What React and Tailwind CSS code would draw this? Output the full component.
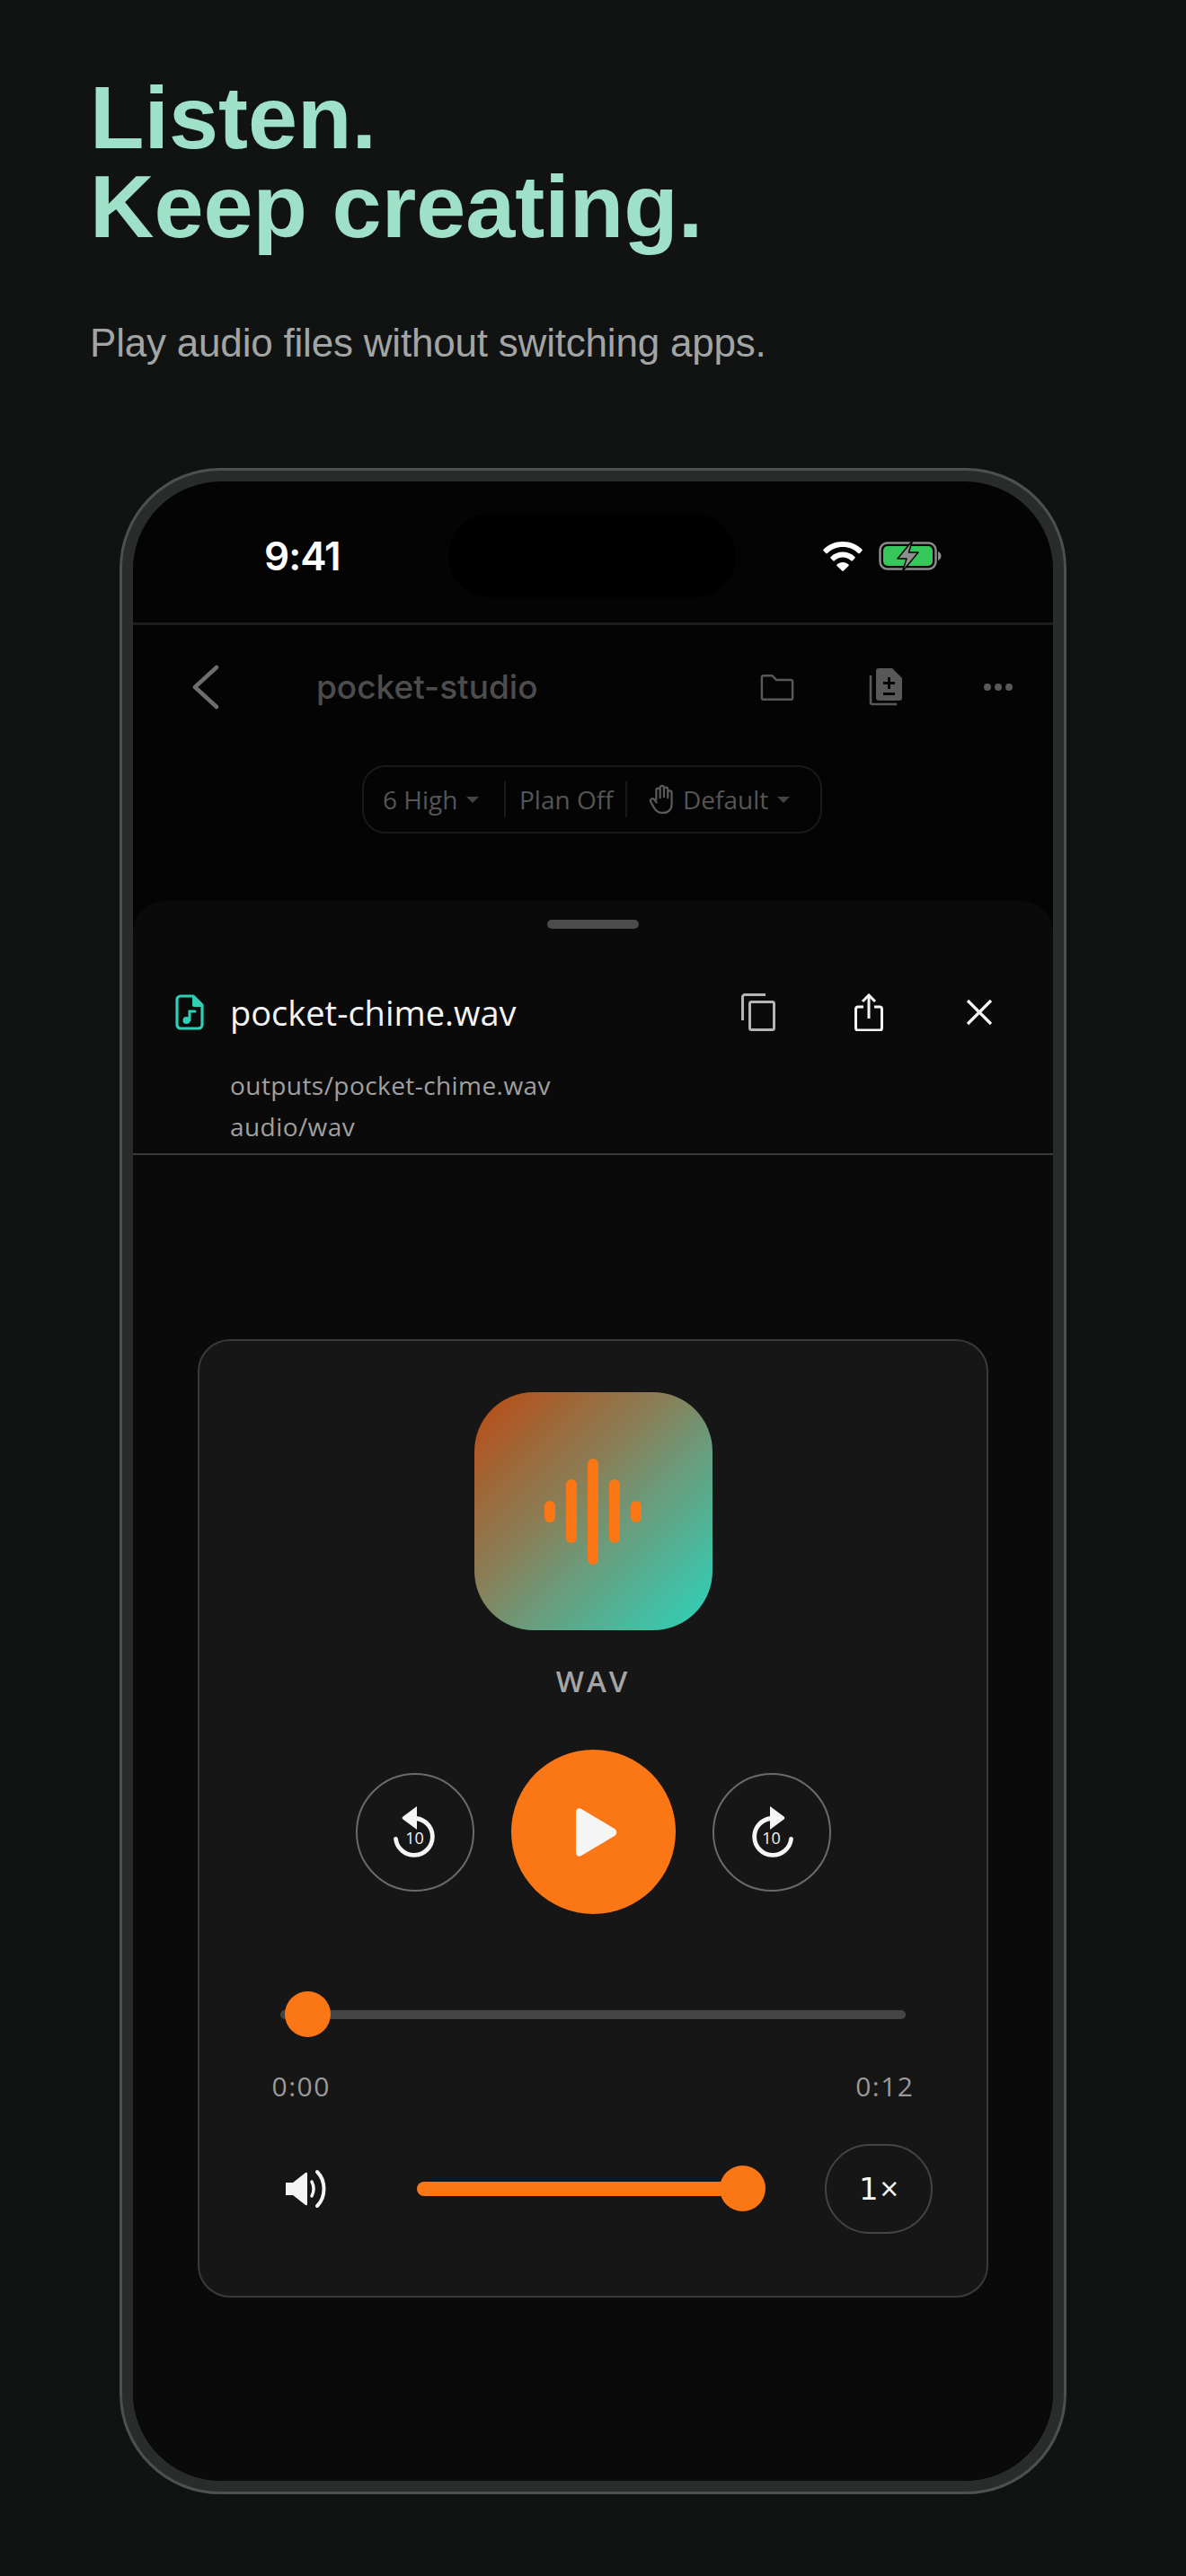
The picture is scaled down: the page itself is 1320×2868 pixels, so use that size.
import React from "react";

const plex = { fontFamily: '"Open Sans", "Noto Sans", sans-serif' };

function Wifi() {
  return (
    <svg width="44" height="33" viewBox="0 0 44 33" fill="#fff">
      <path d="M22 0C13.6 0 6 3.2.6 8.6c-.5.5-.5 1.2 0 1.700l2.500 2.600c.5.5 1.200.5 1.700 0C9.300 8.500 15.400 5.900 22 5.900s12.700 2.600 17.200 7c.5.5 1.200.5 1.700 0l2.500-2.600c.5-.5.5-1.200 0-1.700C38 3.200 30.400 0 22 0z" />
      <path d="M22 11.500c-5.200 0-9.900 2-13.400 5.400-.5.500-.5 1.200 0 1.700l2.500 2.600c.5.5 1.200.5 1.700 0 2.400-2.300 5.600-3.700 9.200-3.700s6.800 1.400 9.200 3.700c.5.5 1.200.5 1.700 0l2.500-2.600c.5-.5.5-1.200 0-1.700C31.900 13.500 27.200 11.500 22 11.500z" />
      <path d="M22 23c-2.500 0-4.800 1-6.500 2.600-.4.4-.4 1 0 1.400l5.700 5.500c.5.5 1.200.5 1.600 0l5.700-5.500c.4-.4.4-1 0-1.400C26.800 24 24.500 23 22 23z" />
    </svg>
  );
}

function Battery() {
  return (
    <svg width="70" height="34" viewBox="0 0 70 34">
      <rect x="1.500" y="2.500" width="62" height="29" rx="8" fill="none" stroke="#8b8b8b" strokeWidth="2.500" />
      <rect x="5" y="6" width="55" height="22" rx="5" fill="#35c759" />
      <path d="M66 12c2 .5 3.500 2.500 3.500 5s-1.500 4.500-3.500 5z" fill="#8b8b8b" />
      <path d="M37.500 0 21 20h10l-4.500 14L44 13H33.500z" fill="#8f8f8f" stroke="#050505" strokeWidth="1.500" strokeLinejoin="round" />
    </svg>
  );
}

function Folder() {
  return (
    <svg width="38" height="31" viewBox="0 0 40 32" fill="none" stroke="#585858" strokeWidth="2.600" strokeLinejoin="round">
      <path d="M2 4a2 2 0 0 1 2-2h10l5 5h17a2 2 0 0 1 2 2v19a2 2 0 0 1-2 2H4a2 2 0 0 1-2-2z" />
    </svg>
  );
}

function DocStack() {
  return (
    <svg width="38" height="42" viewBox="0 0 38 42">
      <path d="M2 9v29a2 2 0 0 0 2 2h26" fill="none" stroke="#585858" strokeWidth="2.600" strokeLinecap="round" />
      <path fillRule="evenodd" d="M11 0h15l11 11v22a3 3 0 0 1-3 3H11a3 3 0 0 1-3-3V3a3 3 0 0 1 3-3zm10 10v5h-5v3h5v5h3v-5h5v-3h-5v-5zm-5 17v3h13v-3z" fill="#585858" />
    </svg>
  );
}

function AudioFile() {
  return (
    <svg width="32" height="40" viewBox="0 0 32 40" fill="none">
      <path d="M20 2H6a4 4 0 0 0-4 4v28a4 4 0 0 0 4 4h20a4 4 0 0 0 4-4V12z" stroke="#2fcfb5" strokeWidth="3.200" strokeLinejoin="round" />
      <path d="M19 2h2l9 9v3H21a2 2 0 0 1-2-2z" fill="#2fcfb5" />
      <path d="M16 29V19h6" stroke="#2fcfb5" strokeWidth="3" strokeLinecap="round" />
      <circle cx="12.500" cy="29" r="4" fill="#2fcfb5" />
    </svg>
  );
}

function Copy() {
  return (
    <svg width="38" height="42" viewBox="0 0 38 42" fill="none" stroke="#b4b4b0" strokeWidth="3">
      <rect x="9.500" y="9.500" width="27" height="31" rx="2" />
      <path d="M1.500 30V4a2.500 2.500 0 0 1 2.500-2.500h23" />
    </svg>
  );
}

function Share() {
  return (
    <svg width="32" height="42" viewBox="0 0 32 42" fill="none" stroke="#f5f5f5" strokeWidth="3">
      <path d="M10 15H4a2.500 2.500 0 0 0-2.500 2.500v21A2.500 2.500 0 0 0 4 41h24a2.500 2.500 0 0 0 2.500-2.500v-21A2.500 2.500 0 0 0 28 15h-6" />
      <path d="M16 28V3" />
      <path d="M9 9l7-7 7 7" fill="none" />
    </svg>
  );
}

function Close() {
  return (
    <svg width="30" height="30" viewBox="0 0 30 30" stroke="#f5f5f5" strokeWidth="3.200">
      <path d="M2 2l26 26M28 2L2 28" />
    </svg>
  );
}

function Skip({ forward }) {
  return (
    <div className="relative w-[50px] h-[60px]">
      <svg width="50" height="60" viewBox="0 0 50 60" fill="none" className={forward ? "-scale-x-100" : ""}>
        <path d="M26 14.500a20.500 20.500 0 1 1-22.500 23" stroke="#f5f5f5" strokeWidth="4.800" strokeLinecap="round" />
        <path d="M27 1 11.500 12.500a2 2 0 0 0 0 3L27 27z" fill="#f5f5f5" />
      </svg>
      <span className="absolute left-0 right-0 top-[24px] text-center text-[18px] leading-[24px] text-[#f5f5f5]" style={plex}>10</span>
    </div>
  );
}

function Speaker() {
  return (
    <svg width="48" height="44" viewBox="0 0 48 44" fill="none">
      <path d="M0 15h8L22 4c1.200-.8 2-.2 2 1v34c0 1.200-.8 1.800-2 1L8 29H0z" fill="#f5f5f5" />
      <path d="M29 14c2.600 5 2.600 11 0 16" stroke="#f5f5f5" strokeWidth="3.500" strokeLinecap="round" />
      <path d="M35 3c10 10 10 28 0 38" stroke="#f5f5f5" strokeWidth="4" strokeLinecap="round" />
    </svg>
  );
}

function Hand() {
  return (
    <svg width="28" height="34" viewBox="0 0 30 36" fill="none" stroke="#5a5a5a" strokeWidth="2.400" strokeLinecap="round" strokeLinejoin="round">
      <path d="M9 18V7a2.300 2.300 0 0 1 4.600 0v9M13.600 15V4a2.300 2.300 0 0 1 4.600 0v11M18.200 15V6a2.300 2.300 0 0 1 4.600 0v10M22.800 16v-6a2.300 2.300 0 0 1 4.600 0v14c0 6-4 10-10 10h-2c-5 0-7-3-9-6l-4-7c-1.500-3 2-5 4-3l3 3.500" />
    </svg>
  );
}

function Caret() {
  return <span className="block w-0 h-0 border-x-[7px] border-x-transparent border-t-[7px] border-t-[#444]" />;
}

export default function App() {
  return (
    <div className="w-[1320px] h-[2868px] bg-[#101312] overflow-hidden font-['Liberation_Sans',sans-serif]">
      <header className="pl-[100px] pt-[81px]">
        <h1 className="text-[99px] leading-[99px] font-bold text-[#9fe0c9]">
          Listen.
          <br />
          Keep creating.
        </h1>
        <p className="mt-[76px] text-[44px] leading-[54px] text-[#a3a5a4] tracking-[-0.2px]">Play audio files without switching apps.</p>
      </header>

      <div className="ml-[133px] mt-[112px] w-[1054px] h-[2256px] rounded-[112px] border-[3px] border-[#4c504f] bg-[#282c2b] p-[12px]">
        <div className="w-[1024px] h-[2226px] rounded-[98px] bg-[#040404] overflow-hidden flex flex-col">
          {/* status bar */}
          <div className="h-[160px] border-b-[3px] border-[#1c1e1e] flex items-center pl-[146px] pr-[124px] pt-[9px] shrink-0 relative">
            <span className="text-[44px] leading-[54px] font-semibold text-white font-['Inter',sans-serif] tracking-[-1px] w-[84px]">9:41</span>
            <div className="absolute left-[351px] top-[36px] w-[320px] h-[93px] rounded-full bg-black" />
            <div className="ml-auto flex items-center gap-[18px]">
              <Wifi />
              <Battery />
            </div>
          </div>

          {/* dimmed nav */}
          <div className="h-[307px] shrink-0 flex flex-col">
            <div className="h-[138px] flex items-center shrink-0">
              <svg className="ml-[66px]" width="30" height="50" viewBox="0 0 30 50" fill="none" stroke="#6e6e6e" strokeWidth="4.500" strokeLinecap="round" strokeLinejoin="round">
                <path d="M27 3 3 25l24 22" />
              </svg>
              <span className="ml-[108px] text-[37px] leading-[44px] font-['Inter',sans-serif] font-medium text-[#4d4d4d]">pocket-studio</span>
              <div className="ml-auto flex items-center pr-[45px]">
                <Folder />
                <div className="ml-[83px]"><DocStack /></div>
                <div className="ml-[90px] flex gap-[4px]">
                  <span className="w-[8px] h-[8px] rounded-full bg-[#585858]" />
                  <span className="w-[8px] h-[8px] rounded-full bg-[#585858]" />
                  <span className="w-[8px] h-[8px] rounded-full bg-[#585858]" />
                </div>
              </div>
            </div>
            <div className="mt-[18px] ml-[255px] w-[512px] h-[76px] rounded-[26px] border-[2px] border-[#191919] flex items-center pl-[21px] text-[28px] leading-[36px] text-[#555]" style={plex}>
              <span className="w-[81px] whitespace-nowrap">6 High</span>
              <span className="ml-[12px]"><Caret /></span>
              <span className="ml-[28px] w-[2px] h-[40px] bg-[#191919]" />
              <span className="ml-[15px] w-[102px] whitespace-nowrap">Plan Off</span>
              <span className="ml-[16px] w-[2px] h-[40px] bg-[#191919]" />
              <span className="ml-[24px]"><Hand /></span>
              <span className="ml-[10px] w-[94px] whitespace-nowrap">Default</span>
              <span className="ml-[11px]"><Caret /></span>
            </div>
          </div>

          {/* sheet */}
          <div className="flex-1 rounded-t-[36px] bg-[#0a0a0a] flex flex-col">
            <div className="mx-auto mt-[21px] w-[102px] h-[10px] rounded-full bg-[#4b4b4b]" />
            <div className="h-[252px] border-b-[2px] border-[#3a3a3a] pl-[47px] pr-[67px] shrink-0">
              <div className="mt-[70px] flex items-center h-[46px]">
                <AudioFile />
                <span className="ml-[29px] text-[38px] leading-[46px] text-[#f5f5f5]" style={plex}>pocket-chime.wav</span>
                <div className="ml-auto flex items-center">
                  <Copy />
                  <div className="ml-[88px]"><Share /></div>
                  <div className="ml-[92px]"><Close /></div>
                </div>
              </div>
              <div className="ml-[61px] mt-[35px] text-[28px] leading-[46px] text-[#a0a0a0] tracking-[0.43px]" style={plex}>
                <div>outputs/pocket-chime.wav</div>
                <div>audio/wav</div>
              </div>
            </div>

            {/* card */}
            <div className="mt-[205px] mx-[72px] h-[1067px] rounded-[36px] border-[2px] border-[#3a3a3a] bg-[#161616] flex flex-col items-center shrink-0">
              <div className="mt-[57px] w-[265px] h-[265px] rounded-[66px] bg-[linear-gradient(135deg,#b5511a_5%,#8b7d55_40%,#6a9c7c_60%,#33cdb4_95%)] flex items-center justify-center gap-[12px] shrink-0">
                <span className="w-[12px] h-[24px] rounded-full bg-[#fb7715]" />
                <span className="w-[12px] h-[71px] rounded-full bg-[#fb7715]" />
                <span className="w-[12px] h-[118px] rounded-full bg-[#fb7715]" />
                <span className="w-[12px] h-[71px] rounded-full bg-[#fb7715]" />
                <span className="w-[12px] h-[24px] rounded-full bg-[#fb7715]" />
              </div>
              <div className="mt-[35px] text-[33px] leading-[44px] font-semibold tracking-[3px] text-[#a5a5a5]" style={plex}>WAV</div>
              <div className="mt-[54px] flex items-center gap-[41px]">
                <div className="w-[132px] h-[132px] rounded-full border-[2px] border-[#6a6a6a] flex items-center justify-center"><Skip /></div>
                <div className="w-[183px] h-[183px] rounded-full bg-[#fb7715] flex items-center justify-center">
                  <svg className="ml-[8px]" width="46" height="54" viewBox="0 0 46 54" fill="#f5f5f5">
                    <path d="M0 5c0-4 3-6 6-4l37 22c3 2 3 6 0 8L6 53c-3 2-6 0-6-4z" />
                  </svg>
                </div>
                <div className="w-[132px] h-[132px] rounded-full border-[2px] border-[#6a6a6a] flex items-center justify-center"><Skip forward /></div>
              </div>

              <div className="mt-[107px] relative w-[696px] h-[10px] rounded-full bg-[#444] shrink-0">
                <span className="absolute left-[5px] top-[-21px] w-[51px] h-[51px] rounded-full bg-[#fb7715]" />
              </div>
              <div className="mt-[57px] w-[715px] flex justify-between text-[30px] leading-[36px] text-[#9a9a9a] tracking-[1.5px]" style={plex}>
                <span>0:00</span>
                <span>0:12</span>
              </div>
              <div className="mt-[46px] self-start ml-[96px] w-[720px] flex items-center">
                <Speaker />
                <div className="ml-[98px] relative w-[350px] h-[16px] rounded-full bg-[#fb7715]">
                  <span className="absolute left-[337px] top-[-18px] w-[51px] h-[51px] rounded-full bg-[#fb7715]" />
                </div>
                <div className="ml-auto w-[120px] h-[100px] rounded-[50px] border-[2px] border-[#444] flex items-center justify-center gap-[2px] text-[#f5f5f5]">
                  <span className="text-[34px] leading-[40px] font-['DejaVu_Sans',sans-serif]">1</span>
                  <span className="text-[36px] leading-[40px]" style={plex}>×</span>
                </div>
              </div>
            </div>
          </div>
        </div>
      </div>
    </div>
  );
}
